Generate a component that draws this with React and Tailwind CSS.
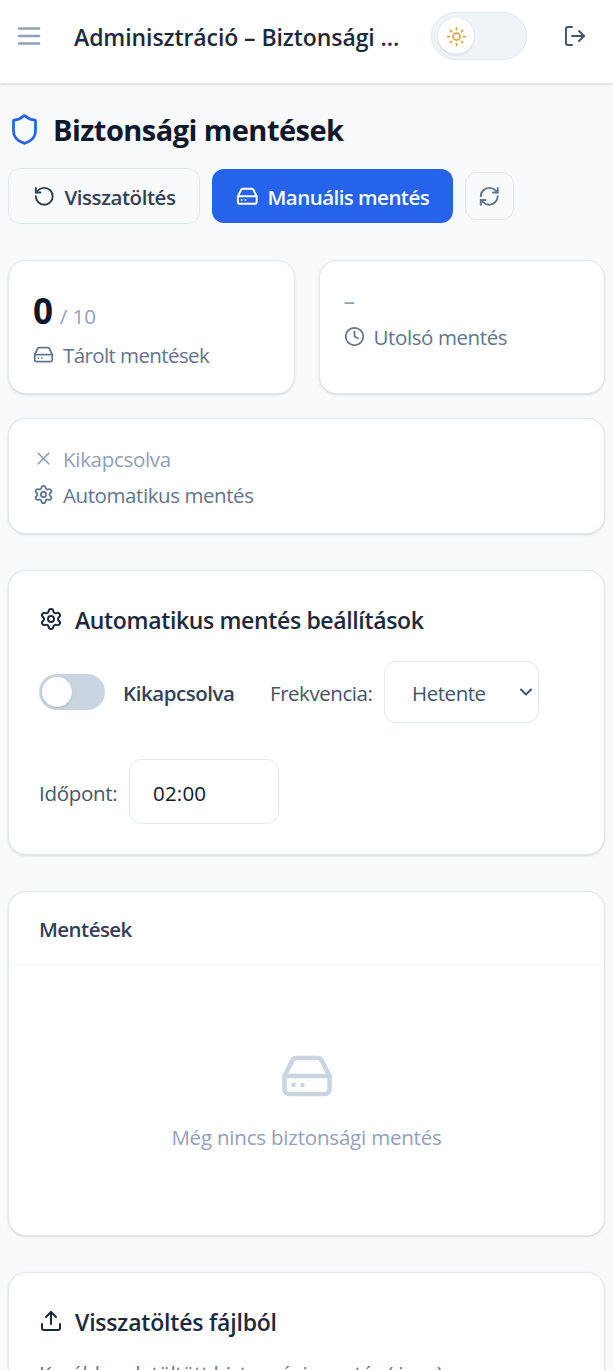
import {
  ChevronDown,
  Clock,
  HardDrive,
  LogOut,
  RefreshCw,
  RotateCcw,
  Settings,
  Shield,
  Sun,
  Upload,
  X,
} from 'lucide-react'

// white rounded panel used for every section
const Card = ({ className = '', children }) => (
  <section className={`rounded-[18px] border border-slate-200 bg-white shadow-sm ${className}`}>
    {children}
  </section>
)

// icon + caption row inside the stat cards
const StatLabel = ({ icon: Icon, className = 'text-slate-500', children }) => (
  <div className={`flex items-center gap-[9px] ${className}`}>
    <Icon size={21} className="mb-px shrink-0" />
    <span>{children}</span>
  </div>
)

function Header() {
  return (
    <header className="flex h-[84px] items-start border-b border-slate-200 bg-white pt-3 shadow-sm">
      <div className="flex h-12 w-full items-center">
        <button className="ml-3.5 text-slate-400">
          <svg width="30" height="30" viewBox="0 0 24 24" fill="none" stroke="currentColor" strokeWidth="2" strokeLinecap="round">
            <path d="M4 6h16M4 12h16M4 18h16" />
          </svg>
        </button>
        <h2 className="mt-0.5 ml-[30px] w-[357px] text-[23px] font-semibold tracking-[-0.08px] whitespace-nowrap text-slate-800">
          Adminisztráció – Biztonsági ...
        </h2>
        <button className="flex h-12 w-24 items-center rounded-full border border-slate-200 bg-[#eef4f7] pl-1.5">
          <span className="flex size-9 items-center justify-center rounded-full bg-white text-[#e2a44a] shadow-sm">
            <Sun size={21} />
          </span>
        </button>
        <button className="ml-9 text-slate-600">
          <LogOut size={24} />
        </button>
      </div>
    </header>
  )
}

function Actions() {
  return (
    <div className="mt-4 flex items-center gap-3">
      <button className="flex h-14 w-48 items-center gap-[9px] rounded-xl border border-slate-200 bg-slate-50 pl-6 font-semibold tracking-[-0.45px] whitespace-nowrap text-slate-700">
        <RotateCcw size={22.5} className="shrink-0" />
        <span className="pt-px">Visszatöltés</span>
      </button>
      <button className="flex h-[54px] w-[241px] items-center gap-[9px] rounded-xl bg-[#2563eb] pl-6 font-semibold tracking-[-0.54px] whitespace-nowrap text-white">
        <HardDrive size={22.5} className="shrink-0" />
        <span className="pt-px">Manuális mentés</span>
      </button>
      <button className="flex h-12 w-[49px] items-center justify-center rounded-xl border border-slate-200 bg-slate-50 text-slate-500">
        <RefreshCw size={22.5} />
      </button>
    </div>
  )
}

function Stats() {
  return (
    <div className="mt-9 grid grid-cols-2 gap-6">
      <Card className="h-[134px] p-6">
        <div className="mt-px flex h-[50px] items-baseline gap-[7px] leading-[50px]">
          <span className="text-[35px] font-bold text-slate-900">0</span>
          <span className="tracking-normal text-slate-400">/ 10</span>
        </div>
        <StatLabel icon={HardDrive} className="mt-[5px] tracking-[-0.6px] text-slate-500">
          Tárolt mentések
        </StatLabel>
      </Card>
      <Card className="h-[134px] p-6">
        <div className="pt-0.5 text-[23px] text-slate-400">–</div>
        <StatLabel icon={Clock} className="mt-2 tracking-[-0.4px] text-slate-500">
          Utolsó mentés
        </StatLabel>
      </Card>
      <Card className="col-span-2 h-[116px] px-6 pt-[22px] leading-9">
        <StatLabel icon={X} className="text-slate-400">Kikapcsolva</StatLabel>
        <StatLabel icon={Settings} className="tracking-[-0.42px] text-slate-500">
          Automatikus mentés
        </StatLabel>
      </Card>
    </div>
  )
}

const SectionTitle = ({ icon: Icon, className = 'tracking-[-0.35px]', children }) => (
  <h3 className={`flex items-center gap-3 text-[23px] leading-[38px] font-semibold text-slate-800 ${className}`}>
    <Icon size={24} className="mb-0.5 shrink-0" />
    <span>{children}</span>
  </h3>
)

function AutoBackup() {
  return (
    <Card className="mt-9 p-[30px]">
      <SectionTitle icon={Settings}>Automatikus mentés beállítások</SectionTitle>
      <div className="mt-[22px] flex h-[62px] items-center whitespace-nowrap">
        <button className="flex h-9 w-[66px] items-center rounded-full bg-slate-300 pl-[3px]">
          <span className="size-[30px] rounded-full bg-white shadow-sm" />
        </button>
        <span className="ml-[18px] w-[147px] pt-px font-semibold tracking-[-0.45px] text-slate-700">
          Kikapcsolva
        </span>
        <span className="w-[114px] pt-px tracking-[-0.45px] text-slate-600">Frekvencia:</span>
        <button className="flex h-full w-[155px] items-center justify-between rounded-xl border border-slate-200 pr-0.5 pl-[27px] tracking-[-0.45px] text-slate-600">
          <span className="pt-px">Hetente</span>
          <ChevronDown size={20} strokeWidth={2.4} />
        </button>
      </div>
      <div className="mt-9 flex h-[65px] items-center">
        <span className="w-[90px] pt-[3px] text-slate-600">Időpont:</span>
        <input
          defaultValue="02:00"
          className="h-full w-[150px] rounded-xl border border-slate-200 px-[23px] pt-[3px] tracking-[0.2px] text-slate-900"
        />
      </div>
    </Card>
  )
}

function Backups() {
  return (
    <Card className="mt-9 h-[345px]">
      <h3 className="flex h-[73px] items-center border-b border-slate-100 px-[30px] pt-px font-semibold tracking-[-0.55px] text-slate-700">
        Mentések
      </h3>
      <div className="flex flex-col items-center pt-[84px]">
        <HardDrive size={54} className="text-slate-300" />
        <p className="mt-5 tracking-[-0.2px] text-slate-400">Még nincs biztonsági mentés</p>
      </div>
    </Card>
  )
}

export default function App() {
  return (
    <div className="h-screen overflow-hidden bg-slate-50 font-['Open_Sans',sans-serif] text-[20.5px] leading-7 tracking-[-0.3px]">
      <Header />
      <main className="px-2 pt-[23px]">
        <h1 className="flex items-center gap-3 text-[29px] leading-[45px] font-bold tracking-[-0.54px] text-slate-900">
          <Shield size={33} className="text-[#2563eb]" />
          <span>Biztonsági mentések</span>
        </h1>
        <Actions />
        <Stats />
        <AutoBackup />
        <Backups />
        <Card className="mt-9 p-[30px]">
          <SectionTitle icon={Upload} className="tracking-[-0.2px]">
            Visszatöltés fájlból
          </SectionTitle>
          <p className="mt-[18px] whitespace-nowrap text-slate-500">
            Korábban letöltött biztonsági mentés (.json)
          </p>
        </Card>
      </main>
    </div>
  )
}
